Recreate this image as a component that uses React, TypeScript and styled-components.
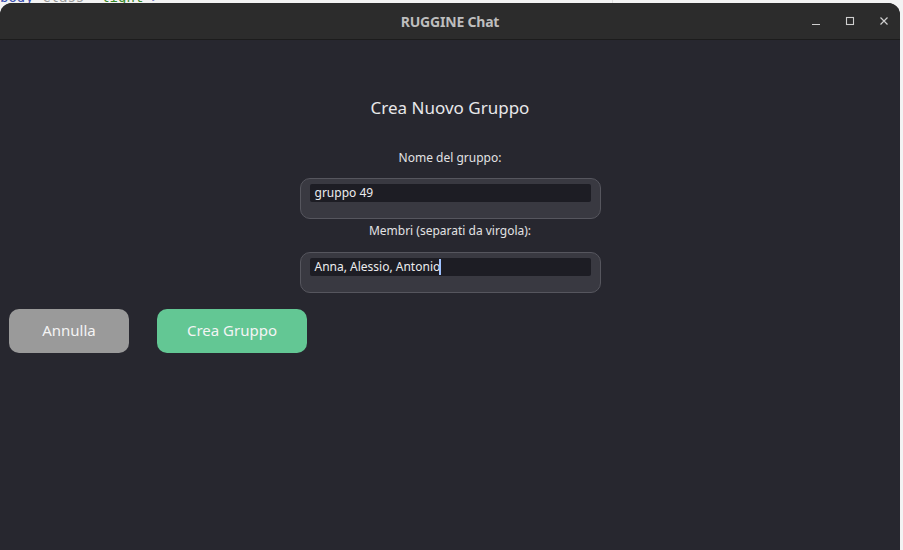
import React from "react";
import styled, { createGlobalStyle } from "styled-components";

const Global = createGlobalStyle`
  html, body { margin: 0; padding: 0; background: #f3f3f3; }
  body { width: 903px; height: 550px; overflow: hidden; font-family: "Noto Sans", "Open Sans", sans-serif; }
`;

const Desktop = styled.div`
  position: relative;
  width: 903px;
  height: 550px;
  overflow: hidden;
  background: #f3f3f3;
`;

const Backdrop = styled.div`
  height: 3px;
  overflow: hidden;
  position: relative;
  border-right: 1px solid #e0e0e0;
  width: 612px;
`;

const CodeLine = styled.div`
  position: absolute;
  left: 0;
  top: -11px;
  font-family: "DejaVu Sans Mono", monospace;
  font-size: 14px;
  white-space: pre;
  color: #3b4fb0;
  span { color: #3a8a2a; }
  em { font-style: normal; color: #999; }
`;

const Window = styled.div`
  display: flex;
  flex-direction: column;
  width: 900px;
  height: 547px;
  border-radius: 12px 12px 0 0;
  overflow: hidden;
  background: #27272f;
`;

const TitleBar = styled.div`
  position: relative;
  height: 36px;
  flex: none;
  display: flex;
  align-items: center;
  justify-content: center;
  background: #2c2c2c;
  border-bottom: 1px solid #1c1c1c;
`;

const Title = styled.div`
  font-family: "Noto Sans", sans-serif;
  font-weight: 700;
  font-size: 14px;
  color: #bebebe;
  letter-spacing: -0.2px;
`;

const Controls = styled.div`
  position: absolute;
  right: 8px;
  top: 0;
  height: 36px;
  display: flex;
  align-items: center;
  gap: 18px;
`;

const Ctrl = styled.div`
  width: 16px;
  height: 16px;
  display: flex;
  align-items: center;
  justify-content: center;
`;

const Body = styled.div`
  flex: 1;
  display: flex;
  flex-direction: column;
`;

const Form = styled.div`
  display: flex;
  flex-direction: column;
  align-items: center;
  padding-top: 56px;
`;

const Heading = styled.div`
  font-size: 17px;
  line-height: 24px;
  color: #e8e8ea;
  margin-bottom: 29px;
`;

const Label = styled.div<{ $gap: number }>`
  font-size: 12px;
  line-height: 18px;
  color: #e2e2e4;
  margin-bottom: ${(p) => p.$gap}px;
`;

const Frame = styled.div`
  box-sizing: border-box;
  width: 301px;
  height: 41px;
  border: 1px solid #56565e;
  border-radius: 10px;
  background: #393941;
  padding: 5px 9px 0;
  margin-bottom: 3px;
`;

const Field = styled.div`
  height: 18px;
  background: #1d1d24;
  border-radius: 2px;
  display: flex;
  align-items: center;
  padding-left: 5px;
  font-size: 12px;
  line-height: 16px;
  padding-bottom: 1px;
  box-sizing: border-box;
  color: #ececee;
  white-space: nowrap;
`;

const Caret = styled.span`
  display: inline-block;
  width: 2px;
  height: 16px;
  background: #9fc2ff;
  margin-left: -1px;
`;

const Buttons = styled.div`
  display: flex;
  gap: 28px;
  padding-left: 9px;
  margin-top: 13px;
`;

const Button = styled.div<{ $bg: string; $w: number }>`
  width: ${(p) => p.$w}px;
  height: 44px;
  border-radius: 10px;
  background: ${(p) => p.$bg};
  color: #f4f4f4;
  font-size: 15px;
  padding-bottom: 2px;
  box-sizing: border-box;
  display: flex;
  align-items: center;
  justify-content: center;
`;

export default function App() {
  return (
    <>
      <Global />
      <Desktop>
        <Backdrop>
          <CodeLine>
            {"body "}<em>class</em>{"="}<span>"light"</span>{">"}
          </CodeLine>
        </Backdrop>
        <Window>
          <TitleBar>
            <Title>RUGGINE Chat</Title>
            <Controls>
              <Ctrl>
                <svg width="10" height="10" viewBox="0 0 10 10">
                  <path d="M1 8.5h8" stroke="#cfcfcf" strokeWidth="1.2" />
                </svg>
              </Ctrl>
              <Ctrl>
                <svg width="10" height="10" viewBox="0 0 10 10">
                  <rect x="1.5" y="1.5" width="7" height="7" fill="none" stroke="#cfcfcf" strokeWidth="1.1" />
                </svg>
              </Ctrl>
              <Ctrl>
                <svg width="10" height="10" viewBox="0 0 10 10">
                  <path d="M1.5 1.5l7 7M8.5 1.5l-7 7" stroke="#cfcfcf" strokeWidth="1.2" />
                </svg>
              </Ctrl>
            </Controls>
          </TitleBar>
          <Body>
            <Form>
              <Heading>Crea Nuovo Gruppo</Heading>
              <Label $gap={11}>Nome del gruppo:</Label>
              <Frame>
                <Field>gruppo 49</Field>
              </Frame>
              <Label $gap={12}>Membri (separati da virgola):</Label>
              <Frame>
                <Field>
                  Anna, Alessio, Antonio<Caret />
                </Field>
              </Frame>
            </Form>
            <Buttons>
              <Button $bg="#9a9a9a" $w={120}>Annulla</Button>
              <Button $bg="#63c794" $w={150}>Crea Gruppo</Button>
            </Buttons>
          </Body>
        </Window>
      </Desktop>
    </>
  );
}
